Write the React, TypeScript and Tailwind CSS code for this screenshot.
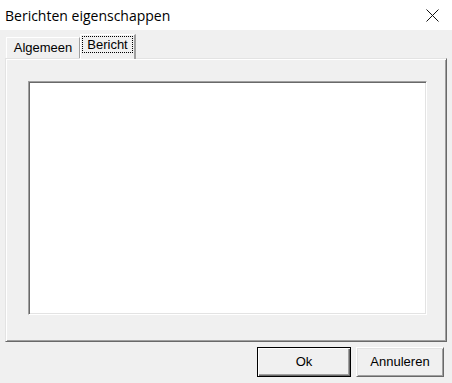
import React from "react";

const ui = { fontFamily: '"Liberation Sans", Arial, sans-serif' };

export default function App() {
  return (
    <div className="w-[452px] h-[383px] bg-[#f0f0f0] flex flex-col overflow-hidden" style={ui}>
      {/* Title bar */}
      <div className="h-[30px] bg-white flex items-center justify-between shrink-0">
        <span className="pl-[5px] pt-[1px] text-[14px] text-black" style={{ fontFamily: '"Open Sans", "Noto Sans", sans-serif' }}>
          Berichten eigenschappen
        </span>
        <div className="w-[46px] h-[30px] flex items-center justify-center mr-[-3px]">
          <svg width="13" height="13" viewBox="0 0 13 13">
            <path d="M0.5 0.5 L12.5 12.5 M12.5 0.5 L0.5 12.5" stroke="#111" strokeWidth="1" fill="none" />
          </svg>
        </div>
      </div>

      {/* Tabs */}
      <div className="flex flex-col pl-[5px] pr-[5px] pt-[4px]">
        <div className="flex items-end h-[25px] pl-[1px] relative z-10 mb-[-1px]">
          <div className="h-[21px] w-[74px] border-t border-l border-white border-r border-r-[#a0a0a0] flex items-center justify-center text-[13px] text-black mb-[1px]">
            Algemeen
          </div>
          <div className="h-[25px] w-[56px] border-t border-l border-white border-r-2 border-r-[#a0a0a0] bg-[#f0f0f0] flex items-start justify-center pt-[1px] px-[1px]">
            <div className="w-full h-[17px] border border-dotted border-black flex items-center justify-center text-[13px] text-black">
              Bericht
            </div>
          </div>
        </div>

        {/* Panel */}
        <div className="h-[284px] border border-t-[#e3e3e3] border-l-[#e3e3e3] border-r-[#696969] border-b-[#696969] shadow-[inset_1px_1px_0_#ffffff,inset_-1px_-1px_0_#a0a0a0] pl-[22px] pt-[22px] pr-[19px] pb-[26px] flex">
          <div className="flex-1 bg-white border border-t-[#a0a0a0] border-l-[#a0a0a0] border-r-white border-b-white shadow-[inset_1px_1px_0_#696969,inset_-1px_-1px_0_#e3e3e3]" />
        </div>
      </div>

      {/* Buttons */}
      <div className="flex justify-end gap-[5px] pr-[8px] pt-[5px]">
        <button className="w-[94px] h-[30px] border border-black bg-[#f0f0f0] text-[13px] text-black shadow-[inset_1px_1px_0_#ffffff,inset_-1px_-1px_0_#696969,inset_-2px_-2px_0_#a0a0a0]">
          Ok
        </button>
        <button className="w-[88px] h-[30px] border border-t-white border-l-white border-r-[#696969] border-b-[#696969] bg-[#f0f0f0] text-[13px] text-black shadow-[inset_1px_1px_0_#e3e3e3,inset_-1px_-1px_0_#a0a0a0]">
          Annuleren
        </button>
      </div>
    </div>
  );
}
